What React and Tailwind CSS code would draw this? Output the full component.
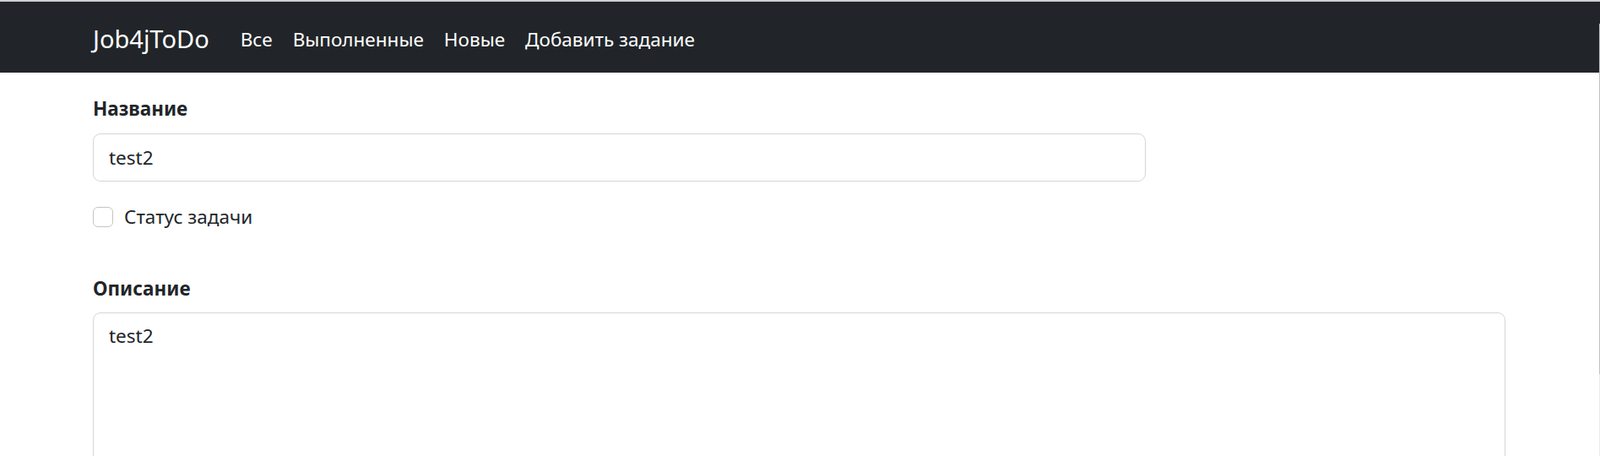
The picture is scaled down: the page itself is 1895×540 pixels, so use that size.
export default function App() {
  const links = ['Все', 'Выполненные', 'Новые', 'Добавить задание']

  return (
    <div className="flex w-[1895px] h-[540px] overflow-hidden bg-white text-[#212529] font-['Noto_Sans',sans-serif]">
      <div className="flex-1 flex flex-col">
        <div className="h-[2px] shrink-0 bg-[#cfcfcf]" />
        <nav className="h-[84px] shrink-0 bg-[#212529] flex items-center pl-[110px]">
          <span className="text-[29px] leading-[45px] text-white mr-[25px] mt-[2px]">Job4jToDo</span>
          {links.map((l) => (
            <a key={l} href="#" className="text-[22.5px] leading-[36px] text-white px-[12px] mt-[5px]">{l}</a>
          ))}
        </nav>

        <form className="shrink-0 pl-[110px] pt-[25px]">
          <label className="block font-bold text-[22.5px] leading-[36px] mb-[11px]">Название</label>
          <input
            defaultValue="test2"
            className="block w-[1247px] h-[57px] px-[18px] text-[22.5px] leading-[36px] border border-[#d3d6da] rounded-[9px] outline-none"
          />

          <div className="flex items-start mt-[24px] h-[36px]">
            <span className="mt-[6px] w-[24px] h-[24px] border border-[#c4c4c4] rounded-[6px] bg-white" />
            <span className="ml-[13px] text-[22.5px] leading-[36px]">Статус задачи</span>
          </div>

          <label className="block font-bold text-[22.5px] leading-[36px] mt-[49px] mb-[10px]">Описание</label>
          <textarea
            defaultValue="test2"
            className="block w-[1673px] h-[300px] px-[18px] py-[9px] text-[22.5px] leading-[36px] border border-[#d3d6da] rounded-[9px] outline-none resize-none"
          />
        </form>
      </div>

      <div className="w-[1px] flex flex-col">
        <div className="h-[2px] shrink-0 bg-[#cfcfcf]" />
        <div className="h-[26px] shrink-0 bg-[#212529]" />
        <div className="h-[415px] shrink-0 bg-[#c1c1c1]" />
        <div className="flex-1 bg-[#ececec]" />
      </div>
    </div>
  )
}
